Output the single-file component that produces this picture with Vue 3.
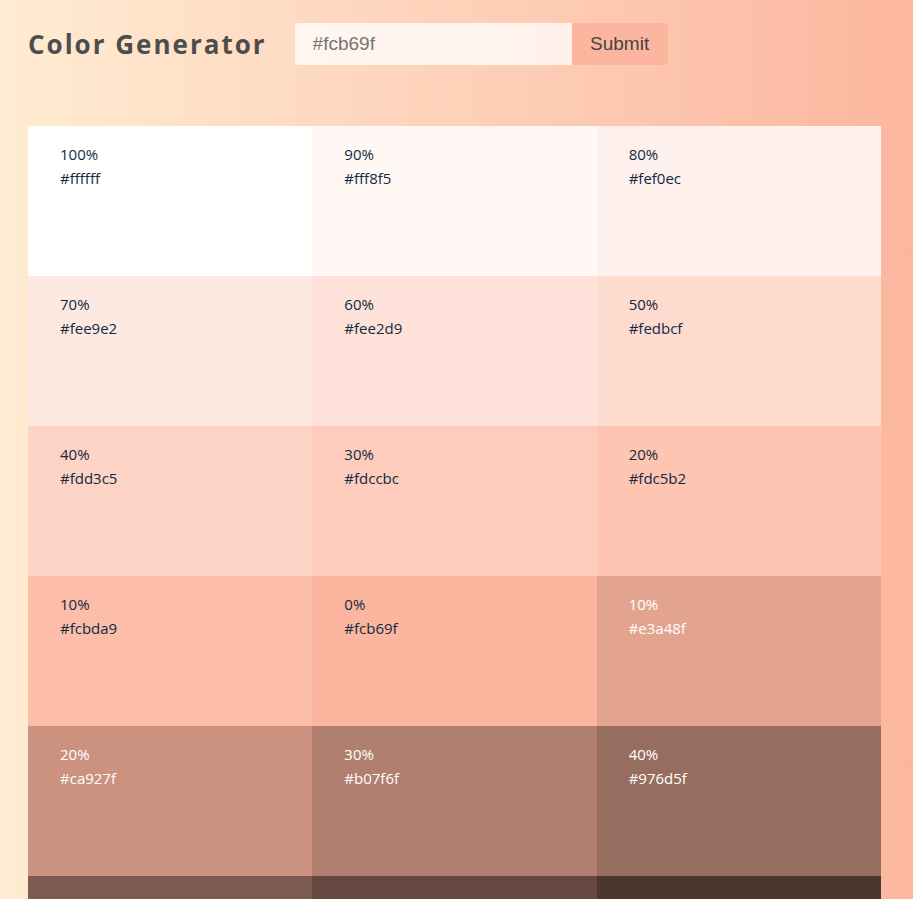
<script setup>
import { ref } from 'vue'

const color = ref('')

const shades = [
  { weight: 100, hex: '#ffffff' },
  { weight: 90, hex: '#fff8f5' },
  { weight: 80, hex: '#fef0ec' },
  { weight: 70, hex: '#fee9e2' },
  { weight: 60, hex: '#fee2d9' },
  { weight: 50, hex: '#fedbcf' },
  { weight: 40, hex: '#fdd3c5' },
  { weight: 30, hex: '#fdccbc' },
  { weight: 20, hex: '#fdc5b2' },
  { weight: 10, hex: '#fcbda9' },
  { weight: 0, hex: '#fcb69f' },
  { weight: 10, hex: '#e3a48f', dark: true },
  { weight: 20, hex: '#ca927f', dark: true },
  { weight: 30, hex: '#b07f6f', dark: true },
  { weight: 40, hex: '#976d5f', dark: true },
  { weight: 50, hex: '#7e5b50', dark: true },
  { weight: 60, hex: '#654940', dark: true },
  { weight: 70, hex: '#4c3730', dark: true }
]
</script>

<template>
  <div class="page">
    <header class="header">
      <h1 class="title">Color Generator</h1>
      <form class="form" @submit.prevent>
        <input v-model="color" class="field" type="text" placeholder="#fcb69f" aria-label="Color" />
        <button class="submit" type="submit">Submit</button>
      </form>
    </header>
    <main class="colors">
      <article
        v-for="(shade, i) in shades"
        :key="i"
        class="color"
        :class="{ dark: shade.dark }"
        :style="{ backgroundColor: shade.hex }"
      >
        <p class="line">{{ shade.weight }}%</p>
        <p class="line">{{ shade.hex }}</p>
      </article>
    </main>
  </div>
</template>

<style>
body {
  margin: 0;
  background: linear-gradient(to right, #ffecd2, #fcb69f);
}
</style>

<style scoped>
.page {
  padding: 0 32px 0 28px;
  font-family: "Open Sans", "Noto Sans", sans-serif;
  color: #102a42;
}
.header {
  display: flex;
  align-items: center;
  gap: 28px;
  padding: 23px 0 61px;
}
.title {
  margin: 0;
  font-size: 26px;
  line-height: 42px;
  font-weight: 700;
  letter-spacing: 2px;
  color: #4d4d4d;
}
.form {
  display: flex;
}
.field,
.submit {
  box-sizing: border-box;
  height: 42px;
  padding: 0 18px;
  border: 0;
  font-family: "Liberation Sans", Arial, sans-serif;
  font-size: 19px;
  color: #444444;
}
.field {
  width: 277px;
  border-radius: 4px 0 0 4px;
  background: rgba(255, 255, 255, 0.75);
}
.field::placeholder {
  color: #757575;
}
.submit {
  width: 96px;
  border-radius: 0 4px 4px 0;
  background: #fcb69f;
}
.colors {
  display: grid;
  grid-template-columns: repeat(3, 1fr);
  grid-auto-rows: 150px;
}
.color {
  padding: 16px 32px;
}
.dark {
  color: #ffffff;
}
.line {
  margin: 0;
  font-size: 15px;
  line-height: 24px;
}
</style>
